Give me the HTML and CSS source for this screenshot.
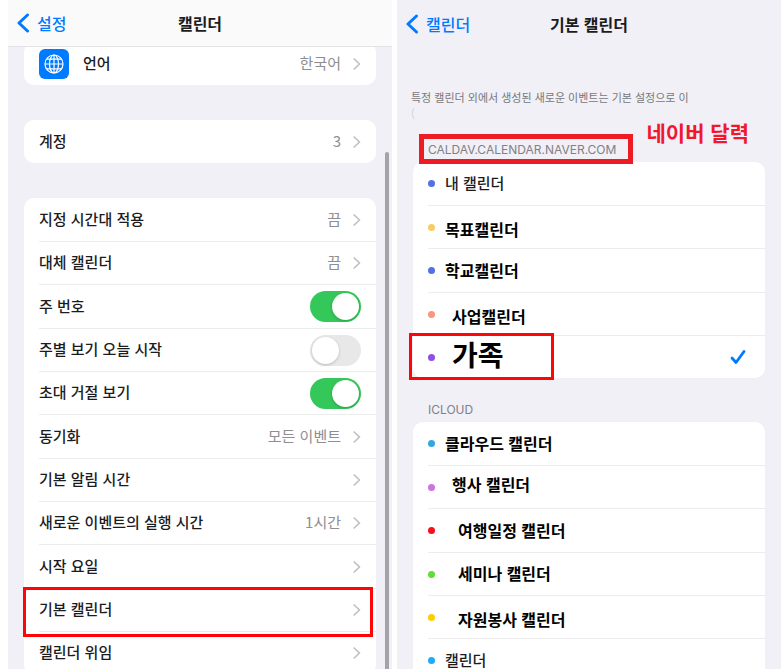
FILE: index.html
```html
<!DOCTYPE html>
<html lang="ko">
<head>
  <meta charset="utf-8">
  <title>캘린더 설정</title>
  <link rel="stylesheet" href="styles.css">
</head>
<body>
  <svg class="symbols" xmlns="http://www.w3.org/2000/svg">
    <symbol id="back" viewBox="0 0 14 20">
      <path d="M11.500 2 3 10l8.500 8" fill="none" stroke="currentColor" stroke-width="3" stroke-linecap="round" stroke-linejoin="round"/>
    </symbol>
    <symbol id="chevron" viewBox="0 0 8 12">
      <path d="M1.200 1 6.500 6l-5.300 5" fill="none" stroke="currentColor" stroke-width="1.700" stroke-linecap="round" stroke-linejoin="round"/>
    </symbol>
    <symbol id="check" viewBox="0 0 16 16">
      <path d="M2 9 6 13.500 14 2.500" fill="none" stroke="currentColor" stroke-width="2.800" stroke-linecap="round" stroke-linejoin="round"/>
    </symbol>
  </svg>
  <main class="screens">
    <section class="screen">
      <header class="nav nav-bar">
        <a class="back" href="#"><svg><use href="#back"/></svg>설정</a>
        <h1>캘린더</h1>
      </header>
      <div class="settings">
        <ul class="card">
          <li>
            <a class="row" href="#">
              <svg class="globe" viewBox="0 0 30 30">
                <rect width="30" height="30" rx="6" fill="#007aff"/>
                <g fill="none" stroke="#fff" stroke-width="1.200">
                  <circle cx="15" cy="15" r="9"/>
                  <ellipse cx="15" cy="15" rx="4.500" ry="9"/>
                  <path d="M15 6v18M6 15h18M7.500 10.200h15M7.500 19.800h15"/>
                </g>
              </svg>
              <span class="name">언어</span><span class="value">한국어</span>
              <svg class="chevron"><use href="#chevron"/></svg>
            </a>
          </li>
        </ul>
        <ul class="card">
          <li><a class="row" href="#"><span class="name">계정</span><span class="value">3</span><svg class="chevron"><use href="#chevron"/></svg></a></li>
        </ul>
        <ul class="card">
          <li><a class="row" href="#"><span class="name">지정 시간대 적용</span><span class="value">끔</span><svg class="chevron"><use href="#chevron"/></svg></a></li>
          <li><a class="row" href="#"><span class="name">대체 캘린더</span><span class="value">끔</span><svg class="chevron"><use href="#chevron"/></svg></a></li>
          <li><label class="row"><span class="name">주 번호</span><input class="switch" type="checkbox" checked></label></li>
          <li><label class="row"><span class="name">주별 보기 오늘 시작</span><input class="switch" type="checkbox"></label></li>
          <li><label class="row"><span class="name">초대 거절 보기</span><input class="switch" type="checkbox" checked></label></li>
          <li><a class="row" href="#"><span class="name">동기화</span><span class="value">모든 이벤트</span><svg class="chevron"><use href="#chevron"/></svg></a></li>
          <li><a class="row" href="#"><span class="name">기본 알림 시간</span><svg class="chevron"><use href="#chevron"/></svg></a></li>
          <li><a class="row" href="#"><span class="name">새로운 이벤트의 실행 시간</span><span class="value">1시간</span><svg class="chevron"><use href="#chevron"/></svg></a></li>
          <li><a class="row" href="#"><span class="name">시작 요일</span><svg class="chevron"><use href="#chevron"/></svg></a></li>
          <li class="marked marked-row"><a class="row" href="#"><span class="name">기본 캘린더</span><svg class="chevron"><use href="#chevron"/></svg></a></li>
          <li><a class="row" href="#"><span class="name">캘린더 위임</span><svg class="chevron"><use href="#chevron"/></svg></a></li>
        </ul>
      </div>
      <div class="scroll-thumb"></div>
    </section>

    <section class="screen">
      <header class="nav">
        <a class="back" href="#"><svg><use href="#back"/></svg>캘린더</a>
        <h1>기본 캘린더</h1>
      </header>
      <p class="hint">특정 캘린더 외에서 생성된 새로운 이벤트는 기본 설정으로 이<br><span class="faded">(</span></p>
      <div class="group-head">
        <h2 class="marked marked-title">CALDAV.CALENDAR.NAVER.COM</h2>
        <span class="note">네이버 달력</span>
      </div>
      <ul class="card">
        <li><label class="row"><i class="dot indigo"></i><span class="name">내 캘린더</span><input type="radio" name="calendar"></label></li>
        <li><label class="row"><i class="dot sand"></i><span class="name typed low">목표캘린더</span><input type="radio" name="calendar"></label></li>
        <li><label class="row"><i class="dot indigo"></i><span class="name typed">학교캘린더</span><input type="radio" name="calendar"></label></li>
        <li><label class="row"><i class="dot salmon"></i><span class="name typed low indent">사업캘린더</span><input type="radio" name="calendar"></label></li>
        <li class="marked marked-choice"><label class="row"><i class="dot violet"></i><span class="name large indent">가족</span><input type="radio" name="calendar" checked><svg class="check"><use href="#check"/></svg></label></li>
      </ul>
      <div class="group-head">
        <h2>ICLOUD</h2>
      </div>
      <ul class="card">
        <li><label class="row"><i class="dot blue"></i><span class="name typed">클라우드 캘린더</span><input type="radio" name="calendar"></label></li>
        <li><label class="row"><i class="dot orchid"></i><span class="name typed high indent">행사 캘린더</span><input type="radio" name="calendar"></label></li>
        <li><label class="row"><i class="dot red"></i><span class="name typed indent-deep">여행일정 캘린더</span><input type="radio" name="calendar"></label></li>
        <li><label class="row"><i class="dot green"></i><span class="name typed indent-deep">세미나 캘린더</span><input type="radio" name="calendar"></label></li>
        <li><label class="row"><i class="dot yellow"></i><span class="name typed low indent-deep">자원봉사 캘린더</span><input type="radio" name="calendar"></label></li>
        <li><label class="row"><i class="dot sky"></i><span class="name">캘린더</span><input type="radio" name="calendar"></label></li>
      </ul>
    </section>
  </main>
</body>
</html>
```
FILE: styles.css
```css
*, *::before, *::after {
  box-sizing: border-box;
}
body {
  margin: 0;
  background-color: #fff;
  color: #1c1c1e;
  font-family: "Noto Sans CJK KR", sans-serif;
  font-size: 15px;
  line-height: 20px;
}
h1, h2, p, ul {
  margin: 0;
  padding: 0;
}
ul {
  list-style: none;
}
a {
  color: inherit;
  text-decoration: none;
}
.symbols {
  display: none;
}
.screens {
  display: grid;
  grid-template-columns: 1fr 1fr;
  gap: 5px;
  height: 100vh;
  padding: 0 2px 0 8px;
  overflow: hidden;
}
.screen {
  position: relative;
  background-color: #f1f0f6;
  overflow: hidden;
}

/* top bar */
.nav {
  display: grid;
  grid-template-columns: 1fr auto 1fr;
  align-items: center;
  position: relative;
  z-index: 1;
  height: 47px;
  padding: 0 8px;
}
.nav-bar {
  background-color: #fafafb;
  border-bottom: 1px solid #e4e4e8;
}
.nav h1 {
  font-size: 16px;
  font-weight: 700;
}
.back {
  display: flex;
  align-items: center;
  gap: 7px;
  color: #007aff;
  font-size: 16px;
  font-weight: 500;
}
.back svg {
  width: 14px;
  height: 20px;
}

/* grouped lists */
.settings {
  display: grid;
  gap: 35px;
  margin-top: -5px;
}
.card {
  margin: 0 16px;
  padding-left: 15px;
  background-color: #fff;
  border-radius: 10px;
}
.card li {
  height: 43px;
}
.card li:nth-child(3n) {
  height: 44px;
}
.card li + li {
  border-top: 1px solid #ececee;
}
.row {
  display: flex;
  align-items: center;
  height: 100%;
  padding-right: 15px;
}
.name {
  flex: 1;
  padding-bottom: 2px;
  font-weight: 500;
}
.value {
  padding-bottom: 2px;
  color: #8e8e93;
}
.chevron {
  width: 8px;
  height: 12px;
  margin-left: 12px;
  color: #c0c0c4;
}
.globe {
  width: 30px;
  height: 30px;
  margin-right: 14px;
}
.switch {
  appearance: none;
  width: 51px;
  height: 31px;
  margin: 0;
  padding: 2px;
  border-radius: 16px;
  background-color: #e8e8e9;
}
.switch::before {
  content: "";
  display: block;
  width: 27px;
  height: 27px;
  border-radius: 50%;
  background-color: #fff;
  box-shadow: 0 1px 3px rgba(0, 0, 0, 0.2);
}
.switch:checked {
  background-color: #34c759;
}
.switch:checked::before {
  margin-left: auto;
}
.scroll-thumb {
  position: absolute;
  top: 152px;
  right: 3px;
  bottom: 0;
  width: 4px;
  border-radius: 2px 2px 0 0;
  background-color: #a3a3a8;
}

/* calendar picker */
.hint {
  height: 71px;
  padding: 42px 14px 0;
  color: #77777c;
  font-size: 11px;
  line-height: 16px;
}
.faded {
  color: #d0d0d4;
}
.group-head {
  display: flex;
  align-items: flex-end;
  position: relative;
  height: 44px;
  padding: 0 31px 4px;
}
.group-head h2 {
  color: #808086;
  font-family: Inter, sans-serif;
  font-size: 12px;
  font-weight: 400;
  line-height: 16px;
}
.note {
  position: absolute;
  top: 2px;
  right: 32px;
  color: #f0182c;
  font-size: 21px;
  font-weight: 700;
  line-height: 24px;
}
.dot {
  width: 7px;
  height: 7px;
  margin-right: 10px;
  border-radius: 50%;
}
.row input[type="radio"] {
  appearance: none;
  width: 0;
  height: 0;
  margin: 0;
}
.check {
  width: 16px;
  height: 16px;
  margin-right: 4px;
  color: #007aff;
}
.typed {
  color: #000;
  font-size: 16px;
  font-weight: 700;
}
.large {
  padding-bottom: 6px;
  color: #000;
  font-size: 28px;
  font-weight: 700;
}
.low {
  padding-top: 6px;
}
.high {
  padding-bottom: 6px;
}
.indent {
  padding-left: 7px;
}
.indent-deep {
  padding-left: 13px;
}
.indigo { background-color: #5470e4; }
.sand { background-color: #f5cd62; }
.salmon { background-color: #fa967a; }
.violet { background-color: #8f4fe0; }
.blue { background-color: #33a8df; }
.orchid { background-color: #cc73e1; }
.red { background-color: #fb0d1b; }
.green { background-color: #65db39; }
.yellow { background-color: #ffcc00; }
.sky { background-color: #1badf8; }

/* red frames */
.marked {
  position: relative;
}
.marked::after {
  content: "";
  position: absolute;
  border: 3px solid #ff0505;
  pointer-events: none;
}
.marked-row::after {
  inset: -2px 3px -6px -16px;
}
.marked-title::after {
  inset: -8px -17px -6px -9px;
  border: 5px solid #ed1c24;
}
.marked-choice::after {
  top: -3px;
  bottom: -2px;
  left: -19px;
  width: 145px;
}
```
